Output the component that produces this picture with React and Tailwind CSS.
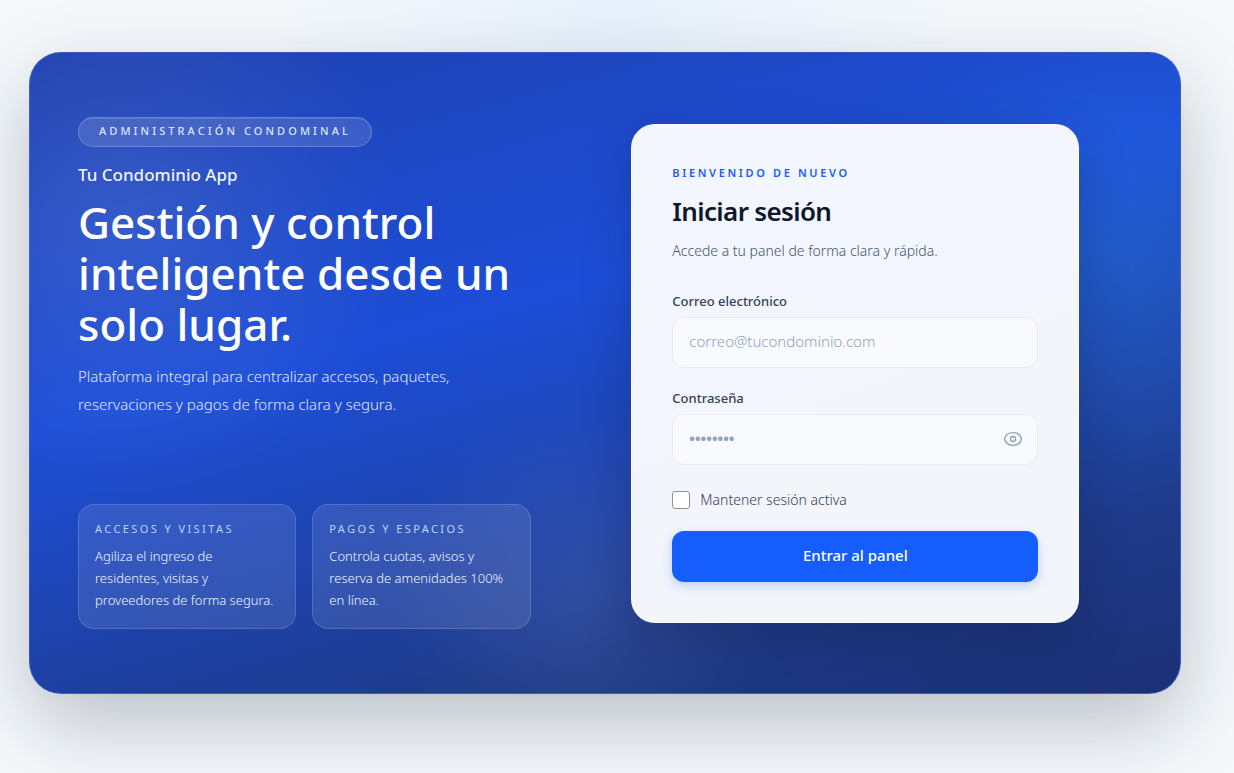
import React, { useState } from "react";

const FEATURES = [
  {
    id: "accesos",
    title: "Accesos y visitas",
    text: "Agiliza el ingreso de residentes, visitas y proveedores de forma segura.",
  },
  {
    id: "pagos",
    title: "Pagos y espacios",
    text: "Controla cuotas, avisos y reserva de amenidades 100% en línea.",
  },
];

const inputClass =
  "block w-full h-[51px] rounded-xl border border-slate-200/80 bg-white/45 px-4 pb-0.5 text-[15px] font-light text-slate-900 placeholder:text-slate-400 focus:outline-none focus:ring-2 focus:ring-blue-500";

function EyeIcon() {
  return (
    <svg
      viewBox="0 0 24 24"
      className="h-5 w-5"
      fill="none"
      stroke="currentColor"
      strokeWidth="1.6"
      strokeLinecap="round"
      strokeLinejoin="round"
    >
      <path d="M1.8 12C3 7.2 7.2 4.4 12 4.4S21 7.2 22.2 12C21 16.8 16.8 19.6 12 19.6S3 16.8 1.8 12Z" />
      <circle cx="12" cy="12" r="3" />
    </svg>
  );
}

function FeatureCard({ title, text }) {
  return (
    <div className="rounded-2xl border border-white/15 bg-white/10 px-4 pt-[15px] pb-[17px]">
      <h2 className="text-[11px] leading-[17px] tracking-[0.22em] uppercase text-blue-100/85">
        {title}
      </h2>
      <p className="mt-2 text-[13px] leading-[22px] font-light text-blue-50">{text}</p>
    </div>
  );
}

function Hero() {
  return (
    <section className="flex flex-col items-start">
      <span className="rounded-full border border-white/20 bg-white/12 px-5 pt-[5px] pb-[7px] text-[11px] leading-4 font-medium tracking-[0.28em] uppercase text-blue-50/90 shadow-[inset_0_1px_0_rgba(255,255,255,0.12)]">
        Administración condominal
      </span>
      <p className="mt-3.5 text-[17px] leading-7 font-medium text-white/95">Tu Condominio App</p>
      <h1 className="mt-2 text-[44px] leading-[51px] font-medium text-white">
        Gestión y control inteligente desde un solo lugar.
      </h1>
      <p className="mt-3 max-w-[400px] text-[15px] leading-7 font-light text-blue-50/95">
        Plataforma integral para centralizar accesos, paquetes, reservaciones y pagos de forma clara
        y segura.
      </p>
      <div className="mt-[86px] grid w-full grid-cols-1 gap-4 sm:grid-cols-2">
        {FEATURES.map((feature) => (
          <FeatureCard key={feature.id} title={feature.title} text={feature.text} />
        ))}
      </div>
    </section>
  );
}

function LoginCard() {
  const [form, setForm] = useState({ email: "", password: "", remember: false });
  const [showPassword, setShowPassword] = useState(false);

  const handleChange = (key, value) => {
    setForm((prev) => ({ ...prev, [key]: value }));
  };

  return (
    <section className="mx-auto w-full max-w-md rounded-3xl border border-white/70 bg-[linear-gradient(160deg,#f3f6ff_0%,#f3f6fe_45%,#f3f5fa_70%)] p-10 shadow-[0_20px_50px_rgba(15,23,42,0.22)]">
      <p className="text-[11px] leading-4 font-semibold tracking-[0.24em] uppercase text-blue-600">
        Bienvenido de nuevo
      </p>
      <h2 className="mt-3 text-[26px] leading-9 font-semibold tracking-tight text-slate-900">
        Iniciar sesión
      </h2>
      <p className="mt-2.5 text-sm leading-6 font-light text-slate-600">
        Accede a tu panel de forma clara y rápida.
      </p>

      <form className="mt-7 flex flex-col gap-5" onSubmit={(e) => e.preventDefault()}>
        <div>
          <label htmlFor="email" className="mb-1.5 block text-[13px] leading-5 font-medium text-slate-700">
            Correo electrónico
          </label>
          <input
            id="email"
            type="email"
            placeholder="correo@tucondominio.com"
            value={form.email}
            onChange={(e) => handleChange("email", e.target.value)}
            className={inputClass}
          />
        </div>

        <div>
          <label htmlFor="password" className="mb-1.5 block text-[13px] leading-5 font-medium text-slate-700">
            Contraseña
          </label>
          <div className="relative">
            <input
              id="password"
              type={showPassword ? "text" : "password"}
              placeholder="••••••••"
              value={form.password}
              onChange={(e) => handleChange("password", e.target.value)}
              className={`${inputClass} placeholder:font-bold`}
            />
            <button
              type="button"
              aria-label="Mostrar contraseña"
              onClick={() => setShowPassword(!showPassword)}
              className="absolute inset-y-0 right-0 flex items-center px-[15px] text-slate-400"
            >
              <EyeIcon />
            </button>
          </div>
        </div>

        <label className="flex items-center gap-2.5 pt-1 text-sm leading-[22px] font-light text-slate-700">
          <input
            type="checkbox"
            checked={form.remember}
            onChange={(e) => handleChange("remember", e.target.checked)}
            className="h-[18px] w-[18px] appearance-none rounded-[3px] border border-[#8f8f9d] bg-white checked:border-blue-600 checked:bg-blue-600"
          />
          Mantener sesión activa
        </label>

        <button
          type="submit"
          className="h-[51px] w-full rounded-xl bg-blue-600 pb-0.5 text-[15px] font-medium text-white shadow-[0_4px_12px_rgba(37,99,235,0.25)] hover:bg-blue-700"
        >
          Entrar al panel
        </button>
      </form>
    </section>
  );
}

export default function App() {
  return (
    <main className="flex min-h-screen justify-center bg-[#f5f9fc] bg-[radial-gradient(ellipse_at_50%_0%,#e8f1fc_0%,#f5f9fc_40%)] py-[52px] pr-6 font-['Noto_Sans',sans-serif]">
      <div className="w-full max-w-6xl self-start rounded-[32px] border border-[#3f66d0]/70 bg-[radial-gradient(circle_at_8%_26%,rgba(255,255,255,0.1),transparent_24%),radial-gradient(circle_at_94%_32%,rgba(56,189,248,0.16),transparent_22%),radial-gradient(circle_at_48%_84%,rgba(255,255,255,0.08),transparent_24%),linear-gradient(165deg,#1e40af_0%,#1d4ed8_40%,#1e3a8a_80%,#1c3075_100%)] px-12 py-16 shadow-[0_30px_80px_rgba(15,23,42,0.25)]">
        <div className="grid items-center gap-12 lg:grid-cols-[9fr_11fr]">
          <Hero />
          <LoginCard />
        </div>
      </div>
    </main>
  );
}
